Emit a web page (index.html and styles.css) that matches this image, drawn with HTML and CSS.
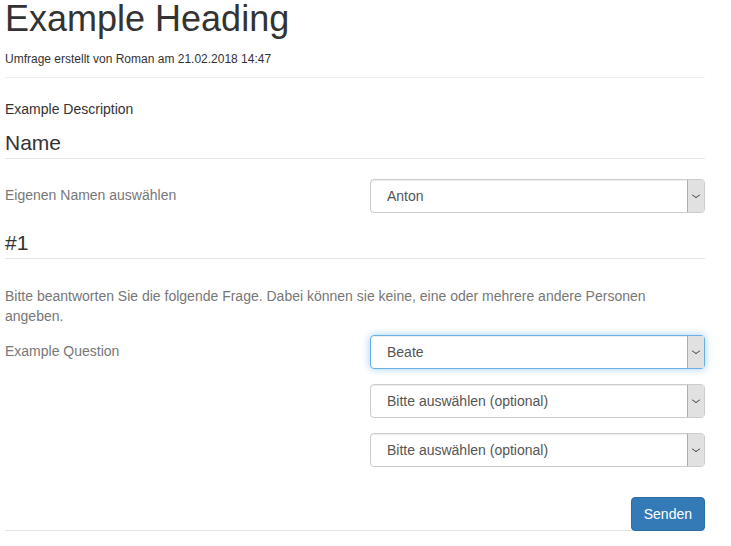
FILE: index.html
```html
<!DOCTYPE html>
<html lang="de">
<head>
	<meta charset="UTF-8">
	<title>Umfrage</title>
	<link rel="stylesheet" href="styles.css">
</head>
<body>

	<div class="page">
		<h1>Example Heading</h1>
		<p class="meta">Umfrage erstellt von Roman am 21.02.2018 14:47</p>
		<hr class="rule">

		<p class="description">Example Description</p>

		<form class="survey" onsubmit="return false;">
			<div class="section">
				<h2 class="section-title first">Name</h2>
				<div class="form-row">
					<label class="control-label" for="ownName">Eigenen Namen auswählen</label>
					<div class="controls">
						<div class="select-wrap">
							<select id="ownName" class="form-control">
								<option>Anton</option>
								<option>Beate</option>
							</select>
						</div>
					</div>
				</div>
			</div>

			<div class="section">
				<h2 class="section-title">#1</h2>
				<p class="hint">Bitte beantworten Sie die folgende Frage. Dabei können sie keine, eine oder mehrere andere Personen angeben.</p>
				<div class="form-row">
					<label class="control-label" for="q1a">Example Question</label>
					<div class="controls">
						<div class="select-wrap">
							<select id="q1a" class="form-control focused">
								<option>Beate</option>
							</select>
						</div>
						<div class="select-wrap">
							<select class="form-control">
								<option>Bitte auswählen (optional)</option>
							</select>
						</div>
						<div class="select-wrap">
							<select class="form-control">
								<option>Bitte auswählen (optional)</option>
							</select>
						</div>
					</div>
				</div>
			</div>

			<div class="actions">
				<button type="submit" class="btn-primary">Senden</button>
			</div>
		</form>
	</div>

</body>
</html>
```

FILE: styles.css
```css
body {
	margin: 0;
	font-family: "Liberation Sans", Arial, Helvetica, sans-serif;
	font-size: 14px;
	line-height: 20px;
	color: #333;
	background: #fff;
}

.page {
	width: 700px;
	margin-left: 5px;
}

h1 {
	margin: 0;
	font-size: 36px;
	font-weight: normal;
	line-height: 38px;
}

.meta {
	margin: 13px 0 0;
	font-size: 12px;
	line-height: 17px;
}

.rule {
	margin: 9px 0 0;
	border: 0;
	border-top: 1px solid #eee;
}

.description {
	margin: 21px 0 0;
}

.section-title {
	margin: 2px 0 20px;
	font-size: 21px;
	font-weight: normal;
	line-height: 30px;
	border-bottom: 1px solid #e5e5e5;
}

.section-title.first {
	margin-top: 9px;
}

.hint {
	margin: 0 0 9px;
	padding-top: 7px;
	color: #777;
}

.form-row {
	display: grid;
	grid-template-columns: 365px 335px;
	margin-bottom: 15px;
}

.control-label {
	padding-top: 6px;
	color: #777;
}

.controls {
	display: flex;
	flex-direction: column;
	gap: 15px;
}

.select-wrap {
	position: relative;
}

/* gray arrow box at the right of each select */
.select-wrap::after {
	content: "";
	position: absolute;
	top: 1px;
	right: 1px;
	bottom: 1px;
	width: 16px;
	background: #e1e1e1;
	border-left: 1px solid #adadad;
	pointer-events: none;
}

.select-wrap::before {
	content: "";
	position: absolute;
	top: 13px;
	right: 6px;
	width: 5px;
	height: 5px;
	border-right: 1px solid #444;
	border-bottom: 1px solid #444;
	transform: scaleY(.7) rotate(45deg);
	z-index: 1;
	pointer-events: none;
}

.form-control {
	display: block;
	width: 100%;
	height: 34px;
	padding: 6px 12px 6px 16px;
	font-family: inherit;
	font-size: 14px;
	color: #555;
	background: #fff;
	border: 1px solid #ccc;
	border-radius: 4px;
	box-shadow: inset 0 1px 1px rgba(0, 0, 0, .075);
	-webkit-appearance: none;
	appearance: none;
	outline: none;
}

.form-control.focused {
	border-color: #66afe9;
	box-shadow: inset 0 1px 1px rgba(0, 0, 0, .075), 0 0 8px rgba(102, 175, 233, .6);
}

.actions {
	display: flex;
	justify-content: flex-end;
	padding-top: 15px;
	border-bottom: 1px solid #e5e5e5;
}

.btn-primary {
	height: 34px;
	padding: 6px 12px;
	font-family: inherit;
	font-size: 14px;
	line-height: 20px;
	color: #fff;
	background: #337ab7;
	border: 1px solid #2e6da4;
	border-radius: 4px;
	margin-bottom: -1px;
	cursor: pointer;
}
```
